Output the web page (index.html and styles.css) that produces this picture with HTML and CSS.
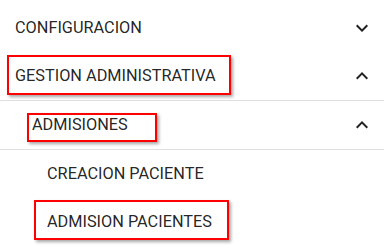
FILE: index.html
```html
<!DOCTYPE html>
<html lang="es">
<head>
<meta charset="utf-8">
<link rel="stylesheet" href="styles.css">
</head>
<body>
<nav class="menu">
  <div class="row lvl1">
    <span class="label">CONFIGURACION</span>
    <svg class="chev" viewBox="0 0 24 24"><path d="M16.59 8.59L12 13.17 7.41 8.59 6 10l6 6 6-6z"/></svg>
  </div>
  <div class="row lvl1">
    <span class="label mark mark1">GESTION ADMINISTRATIVA</span>
    <svg class="chev" viewBox="0 0 24 24"><path d="M12 8l-6 6 1.41 1.41L12 10.83l4.59 4.58L18 14z"/></svg>
  </div>
  <div class="sep"></div>
  <div class="row lvl2">
    <span class="label mark mark2">ADMISIONES</span>
    <svg class="chev" viewBox="0 0 24 24"><path d="M12 8l-6 6 1.41 1.41L12 10.83l4.59 4.58L18 14z"/></svg>
  </div>
  <div class="sep"></div>
  <div class="row lvl3">
    <span class="label">CREACION PACIENTE</span>
  </div>
  <div class="row lvl3">
    <span class="label mark mark3">ADMISION PACIENTES</span>
  </div>
</nav>
</body>
</html>
```
FILE: styles.css
```css
html, body {
  margin: 0;
  padding: 0;
  background: #ffffff;
}
body {
  font-family: Roboto, "Noto Sans", "Liberation Sans", sans-serif;
  color: rgba(0, 0, 0, 0.87);
}
.menu {
  display: flex;
  flex-direction: column;
  padding-top: 4px;
}
.row {
  height: 48px;
  display: flex;
  align-items: center;
  justify-content: space-between;
  padding-right: 10px;
}
.lvl1 { padding-left: 15px; }
.lvl2 { padding-left: 32px; }
.lvl3 { padding-left: 47px; }
.label {
  font-size: 16.3px;
  line-height: 20px;
  position: relative;
  white-space: nowrap;
}
.chev {
  width: 24px;
  height: 24px;
  fill: rgba(0, 0, 0, 0.87);
  flex: none;
}
.sep {
  height: 1px;
  background: #e0e0e0;
}
.mark::after {
  content: "";
  position: absolute;
  border: 2px solid #ff0000;
  box-shadow: 2px 2px 3px rgba(0, 0, 0, 0.35);
}
.mark1::after { top: -11px; bottom: -9px; left: -8px; right: -15px; }
.mark2::after { top: -2px; bottom: -7px; left: -5px; right: -29px; }
.mark3::after { top: -12px; bottom: -8px; left: -13px; right: -17px; }
```
